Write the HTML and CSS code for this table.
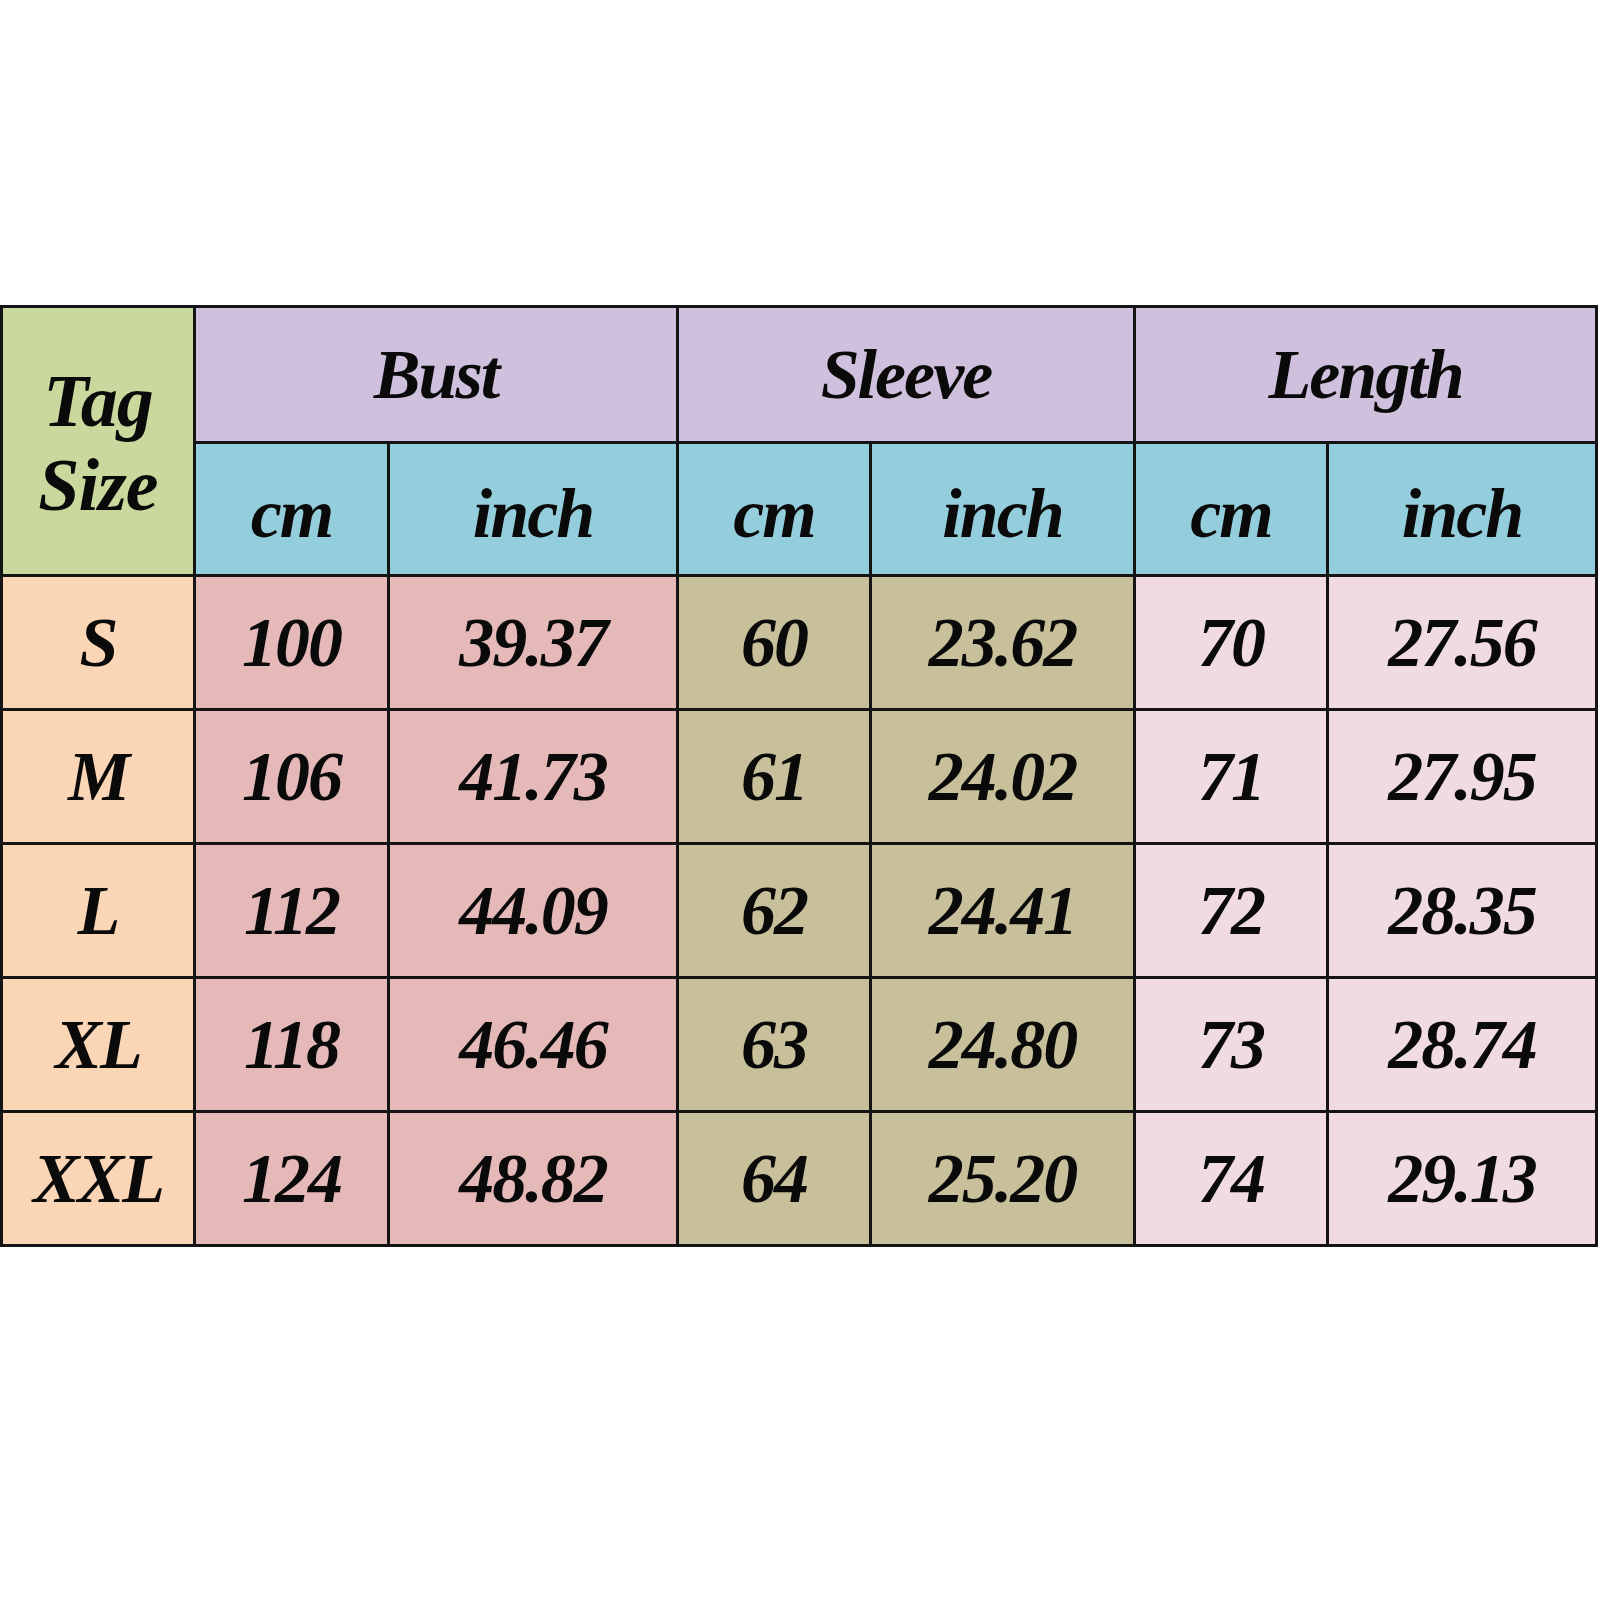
FILE: index.html
```html
<!DOCTYPE html>
<html>
<head>
<meta charset="utf-8">
<link rel="stylesheet" href="styles.css">
</head>
<body>
<div class="chart">
  <div class="cell tag">Tag<br>Size</div>
  <div class="cell grp span2">Bust</div>
  <div class="cell grp span2">Sleeve</div>
  <div class="cell grp span2">Length</div>
  <div class="cell unit">cm</div><div class="cell unit">inch</div>
  <div class="cell unit">cm</div><div class="cell unit">inch</div>
  <div class="cell unit">cm</div><div class="cell unit">inch</div>

  <div class="cell size">S</div>
  <div class="cell bust">100</div><div class="cell bust">39.37</div>
  <div class="cell sleeve">60</div><div class="cell sleeve">23.62</div>
  <div class="cell len">70</div><div class="cell len">27.56</div>

  <div class="cell size">M</div>
  <div class="cell bust">106</div><div class="cell bust">41.73</div>
  <div class="cell sleeve">61</div><div class="cell sleeve">24.02</div>
  <div class="cell len">71</div><div class="cell len">27.95</div>

  <div class="cell size">L</div>
  <div class="cell bust">112</div><div class="cell bust">44.09</div>
  <div class="cell sleeve">62</div><div class="cell sleeve">24.41</div>
  <div class="cell len">72</div><div class="cell len">28.35</div>

  <div class="cell size">XL</div>
  <div class="cell bust">118</div><div class="cell bust">46.46</div>
  <div class="cell sleeve">63</div><div class="cell sleeve">24.80</div>
  <div class="cell len">73</div><div class="cell len">28.74</div>

  <div class="cell size">XXL</div>
  <div class="cell bust">124</div><div class="cell bust">48.82</div>
  <div class="cell sleeve">64</div><div class="cell sleeve">25.20</div>
  <div class="cell len">74</div><div class="cell len">29.13</div>
</div>
</body>
</html>
```
FILE: styles.css
```css
html, body {
  margin: 0;
  padding: 0;
  background: #ffffff;
}
body {
  padding-top: 305px;
  font-family: "Liberation Serif", "Times New Roman", serif;
  font-weight: bold;
  font-style: italic;
  color: #0a0a0a;
}
.chart {
  display: grid;
  width: 1598px;
  box-sizing: border-box;
  grid-template-columns: 190px 191px 286px 190px 261px 190px 266px;
  grid-template-rows: 133px 130px 131px 131px 131px 131px 131px;
  gap: 3px;
  padding: 3px;
  background: #141414;
}
.cell {
  display: flex;
  align-items: center;
  justify-content: center;
  font-size: 70px;
  letter-spacing: -2px;
  line-height: 1;
}
.tag {
  grid-row: span 2;
  background: #c9d89c;
  font-size: 74px;
  letter-spacing: -1px;
  line-height: 84px;
  text-align: center;
  padding-top: 4px;
}
.span2 { grid-column: span 2; }
.grp { background: #cfc0dd; }
.unit { background: #94cedd; padding-top: 10px; }
.size { background: #fad6b7; }
.bust { background: #e6b9b9; }
.sleeve { background: #c8c09a; }
.len { background: #f1dbe2; }
```
